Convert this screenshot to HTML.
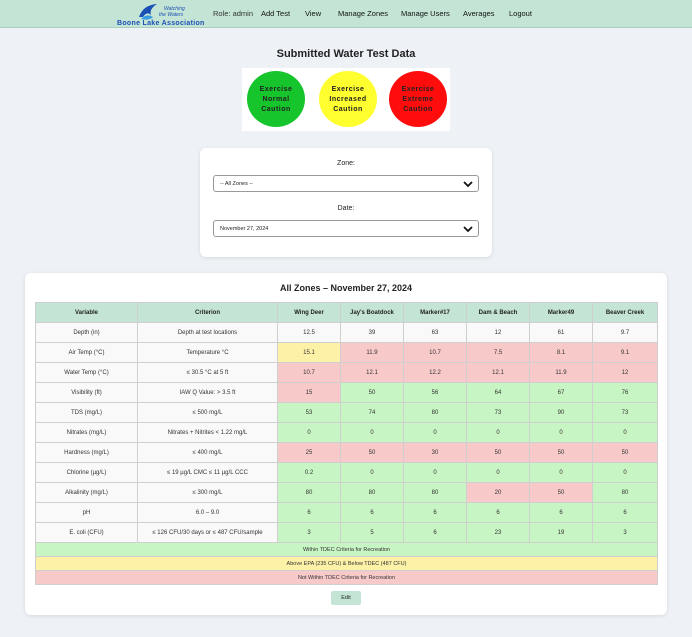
<!DOCTYPE html>
<html><head><meta charset="utf-8"><style>
*{box-sizing:border-box;margin:0;padding:0}
body{width:692px;height:637px;background:#eef2f7;font-family:"Liberation Sans",sans-serif;color:#222;position:relative;overflow:hidden}
.nav{position:absolute;left:0;top:0;width:692px;height:28px;background:#c4e5d5;border-bottom:1px solid #a9cfc0}
.nav span{position:absolute;top:9px;font-size:7.5px;color:#111}
.logo{position:absolute;left:117px;top:1px;width:90px;height:26px}
h1{position:absolute;top:48px;left:0;width:692px;text-align:center;font-size:11px;font-weight:bold}
.sig{position:absolute;left:242px;top:68px;width:208px;height:63px;background:#fff}
.c{position:absolute;top:3px;width:58px;height:56px;border-radius:50%;font-size:7px;font-weight:bold;text-align:center;line-height:10px;padding-top:14px;letter-spacing:.5px}
.card{position:absolute;background:#fff;border-radius:6px;box-shadow:0 1px 4px rgba(0,0,0,.1)}
.lbl{position:absolute;width:100%;text-align:center;font-size:7px}
.sel{position:absolute;left:13px;width:266px;height:17px;border:1px solid #999;border-radius:3px;font-size:5.5px;padding:5px 6px}
.sel svg{position:absolute;right:5px;top:4px}
table{position:absolute;left:10px;top:29px;width:622px;border-collapse:collapse;font-size:6px;text-align:center;table-layout:fixed}
td,th{border:1px solid #cfcfcf;height:20px;color:#333}
th{background:#c4e5d5;font-weight:bold;color:#222}
td{background:#f9f9f9}
.g{background:#c8f5c4}.r{background:#f8c9c9}.y{background:#fdf1a8}
tr.l td{height:14px;font-size:5.5px}
.btn{position:absolute;left:306px;top:318px;width:30px;height:14px;background:#c4e5d5;border-radius:2px;font-size:5.5px;text-align:center;line-height:14px}
</style></head><body>
<div class="nav">
<div class="logo"><svg width="90" height="26"><path d="M22 16 Q26 4 40 3 Q32 8 34 14 Q30 10 26 16 Z" fill="#1a4fb5"/><path d="M24 18 Q30 12 36 16 Q32 20 24 18Z" fill="#3a9ce0"/><text x="47" y="9" font-size="5" font-style="italic" fill="#1a4fb5" font-family="Liberation Sans">Watching</text><text x="42" y="15" font-size="5" font-style="italic" fill="#1a4fb5" font-family="Liberation Sans">the Waters</text><text x="0" y="24" font-size="7" font-weight="bold" fill="#1a4fb5" font-family="Liberation Sans" letter-spacing=".3">Boone Lake Association</text></svg></div>
<span style="left:213px;color:#333">Role: admin</span>
<span style="left:261px">Add Test</span>
<span style="left:305px">View</span>
<span style="left:338px">Manage Zones</span>
<span style="left:401px">Manage Users</span>
<span style="left:463px">Averages</span>
<span style="left:509px">Logout</span>
</div>
<h1>Submitted Water Test Data</h1>
<div class="sig">
<div class="c" style="left:5px;background:#16c42c">Exercise<br>Normal<br>Caution</div>
<div class="c" style="left:77px;background:#ffff30">Exercise<br>Increased<br>Caution</div>
<div class="c" style="left:147px;background:#ff0c0c">Exercise<br>Extreme<br>Caution</div>
</div>
<div class="card" style="left:200px;top:148px;width:292px;height:109px">
<div class="lbl" style="top:12px">Zone:</div>
<div class="sel" style="top:27px">-- All Zones --<svg width="10" height="8"><path d="M1 2 L5 6 L9 2" stroke="#111" stroke-width="1.8" fill="none"/></svg></div>
<div class="lbl" style="top:57px">Date:</div>
<div class="sel" style="top:72px">November 27, 2024<svg width="10" height="8"><path d="M1 2 L5 6 L9 2" stroke="#111" stroke-width="1.8" fill="none"/></svg></div>
</div>
<div class="card" style="left:25px;top:273px;width:642px;height:342px">
<div style="position:absolute;top:10px;width:100%;text-align:center;font-size:9px;font-weight:bold">All Zones – November 27, 2024</div>
<table>
<colgroup><col style="width:102px"><col style="width:140px"><col style="width:63px"><col style="width:63px"><col style="width:63px"><col style="width:63px"><col style="width:63px"><col style="width:65px"></colgroup>
<tr><th>Variable</th><th>Criterion</th><th>Wing Deer</th><th>Jay's Boatdock</th><th>Marker#17</th><th>Dam &amp; Beach</th><th>Marker49</th><th>Beaver Creek</th></tr>
<tr><td>Depth (in)</td><td>Depth at test locations</td><td>12.5</td><td>39</td><td>63</td><td>12</td><td>61</td><td>9.7</td></tr>
<tr><td>Air Temp (°C)</td><td>Temperature °C</td><td class="y">15.1</td><td class="r">11.9</td><td class="r">10.7</td><td class="r">7.5</td><td class="r">8.1</td><td class="r">9.1</td></tr>
<tr><td>Water Temp (°C)</td><td>≤ 30.5 °C at 5 ft</td><td class="r">10.7</td><td class="r">12.1</td><td class="r">12.2</td><td class="r">12.1</td><td class="r">11.9</td><td class="r">12</td></tr>
<tr><td>Visibility (ft)</td><td>IAW Q Value: &gt; 3.5 ft</td><td class="r">15</td><td class="g">50</td><td class="g">56</td><td class="g">64</td><td class="g">67</td><td class="g">76</td></tr>
<tr><td>TDS (mg/L)</td><td>≤ 500 mg/L</td><td class="g">53</td><td class="g">74</td><td class="g">80</td><td class="g">73</td><td class="g">90</td><td class="g">73</td></tr>
<tr><td>Nitrates (mg/L)</td><td>Nitrates + Nitrites &lt; 1.22 mg/L</td><td class="g">0</td><td class="g">0</td><td class="g">0</td><td class="g">0</td><td class="g">0</td><td class="g">0</td></tr>
<tr><td>Hardness (mg/L)</td><td>≤ 400 mg/L</td><td class="r">25</td><td class="r">50</td><td class="r">30</td><td class="r">50</td><td class="r">50</td><td class="r">50</td></tr>
<tr><td>Chlorine (µg/L)</td><td>≤ 19 µg/L CMC ≤ 11 µg/L CCC</td><td class="g">0.2</td><td class="g">0</td><td class="g">0</td><td class="g">0</td><td class="g">0</td><td class="g">0</td></tr>
<tr><td>Alkalinity (mg/L)</td><td>≤ 300 mg/L</td><td class="g">80</td><td class="g">80</td><td class="g">80</td><td class="r">20</td><td class="r">50</td><td class="g">80</td></tr>
<tr><td>pH</td><td>6.0 – 9.0</td><td class="g">6</td><td class="g">6</td><td class="g">6</td><td class="g">6</td><td class="g">6</td><td class="g">6</td></tr>
<tr><td>E. coli (CFU)</td><td>≤ 126 CFU/30 days or ≤ 487 CFU/sample</td><td class="g">3</td><td class="g">5</td><td class="g">6</td><td class="g">23</td><td class="g">19</td><td class="g">3</td></tr>
<tr class="l"><td colspan="8" class="g">Within TDEC Criteria for Recreation</td></tr>
<tr class="l"><td colspan="8" class="y">Above EPA (235 CFU) &amp; Below TDEC (487 CFU)</td></tr>
<tr class="l"><td colspan="8" class="r">Not Within TDEC Criteria for Recreation</td></tr>
</table>
<div class="btn">Edit</div>
</div>
</body></html>
